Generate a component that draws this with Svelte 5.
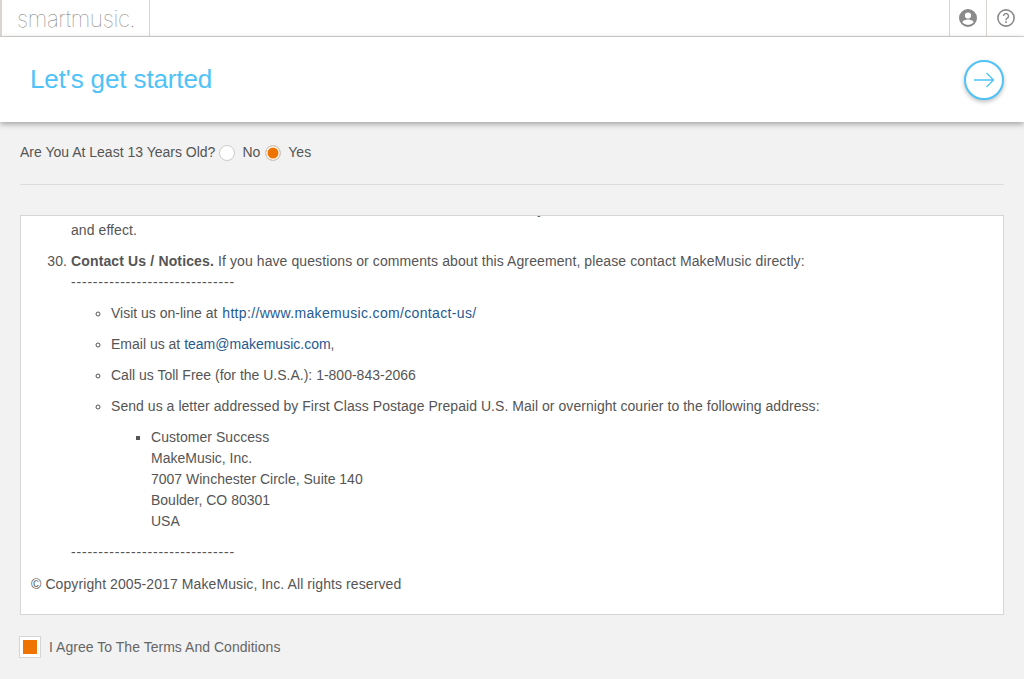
<script>
  const address = ['MakeMusic, Inc.', '7007 Winchester Circle, Suite 140', 'Boulder, CO 80301', 'USA'];
</script>

<div class="page">
  <header class="topbar">
    <div class="logo">smartmusic.</div>
    <div class="spacer"></div>
    <button class="tool" aria-label="Account">
      <svg width="18" height="18" viewBox="0 0 18 18">
        <path fill="#8a8a8a" fill-rule="evenodd" d="M9 0a9 9 0 1 0 0 18A9 9 0 0 0 9 0zm0 3.4a3.1 3.1 0 1 1 0 6.2 3.1 3.1 0 0 1 0-6.2zm0 12.7a7 7 0 0 1-5.6-2.9c.1-1.8 3.7-2.8 5.6-2.8s5.5 1 5.6 2.8A7 7 0 0 1 9 16.100z"/>
      </svg>
    </button>
    <button class="tool help" aria-label="Help">
      <svg width="18" height="18" viewBox="0 0 18 18" fill="none">
        <circle cx="9" cy="9" r="8.1" stroke="#8a8a8a" stroke-width="1.6"/>
        <path d="M6.500 7a2.500 2.500 0 1 1 3.800 2.200c-.9.500-1.300 1-1.300 2" stroke="#8a8a8a" stroke-width="1.500"/>
        <rect x="8.200" y="12.300" width="1.600" height="1.700" fill="#8a8a8a"/>
      </svg>
    </button>
  </header>

  <section class="banner">
    <h1>Let's get started</h1>
    <button class="next" aria-label="Next">
      <svg width="22" height="16" viewBox="0 0 22 16" fill="none" stroke="#4fc3f7" stroke-width="1.300">
        <path d="M1 8h19M13.500 1l7 7-7 7"/>
      </svg>
    </button>
  </section>

  <main class="content">
    <div class="age">
      <span class="question">Are You At Least 13 Years Old?</span>
      <span class="radio"></span>
      <span class="opt">No</span>
      <span class="radio on"></span>
      <span class="opt">Yes</span>
    </div>

    <hr />

    <div class="terms">
      <div class="scroll">
        <ol start="29">
          <li>Unless otherwise noted all the rest of the terms set forth in this shall be fully
            <br />and effect.</li>
          <li>
            <p class="first"><b>Contact Us / Notices.</b> If you have questions or comments about this Agreement, please contact MakeMusic directly:</p>
            <p class="dash">------------------------------</p>
            <ul class="circle">
              <li>Visit us on-line at <a class="url" href="#top">http://www.makemusic.com/contact-us/</a></li>
              <li>Email us at <a href="#top">team@makemusic.com</a>,</li>
              <li>Call us Toll Free (for the U.S.A.): 1-800-843-2066</li>
              <li class="send">Send us a letter addressed by First Class Postage Prepaid U.S. Mail or overnight courier to the following address:
                <ul class="square">
                  <li>Customer Success{#each address as line}<br /><span class="num">{line}</span>{/each}</li>
                </ul>
              </li>
            </ul>
            <p class="dash">------------------------------</p>
          </li>
        </ol>
        <p class="copy">© Copyright 2005-2017 MakeMusic, Inc. All rights reserved</p>
      </div>
    </div>

    <div class="agree">
      <span class="check"><span></span></span>
      <span>I Agree To The Terms And Conditions</span>
    </div>
  </main>
</div>

<style>
  :global(body) {
    margin: 0;
    background: #f2f2f2;
  }
  .page {
    height: 679px;
    overflow: hidden;
    display: flex;
    flex-direction: column;
    font-family: "Liberation Sans", Arial, sans-serif;
    font-size: 14px;
    line-height: 21px;
    color: #555;
    background: #f2f2f2;
  }
  .topbar {
    height: 37px;
    box-sizing: border-box;
    flex: none;
    display: flex;
    background: #fff;
    border-bottom: 1px solid #d9d5d0;
    border-left: 2px solid #d9d5d0;
  }
  .logo {
    width: 148px;
    box-sizing: border-box;
    padding: 5px 0 0 15px;
    border-right: 1px solid #d9d5d0;
    font-family: Inter, sans-serif;
    font-weight: 100;
    font-size: 22.500px;
    line-height: 27px;
    letter-spacing: -0.35px;
    color: #777;
  }
  .spacer {
    flex: 1;
  }
  .tool {
    width: 37px;
    padding: 0;
    display: flex;
    align-items: center;
    justify-content: center;
    background: none;
    border: 0;
    border-left: 1px solid #d9d5d0;
  }
  .tool.help {
    width: 38px;
  }
  .banner {
    height: 85px;
    box-sizing: border-box;
    flex: none;
    display: flex;
    align-items: center;
    justify-content: space-between;
    padding: 0 20px 0 30px;
    background: #fff;
    box-shadow: 0 2px 6px rgba(0, 0, 0, 0.35);
    position: relative;
  }
  h1 {
    margin: 0 0 1px;
    font-size: 26px;
    font-weight: 400;
    line-height: 30px;
    letter-spacing: -0.12px;
    color: #4fc3f7;
  }
  .next {
    width: 40px;
    height: 40px;
    padding: 0;
    display: flex;
    align-items: center;
    justify-content: center;
    background: #fff;
    border: 2px solid #4fc3f7;
    border-radius: 50%;
    box-shadow: 0 2px 4px rgba(0, 0, 0, 0.25);
    margin-top: 1px;
  }
  .content {
    flex: 1;
    padding: 0 20px;
  }
  .age {
    display: flex;
    align-items: center;
    height: 21px;
    margin-top: 20px;
  }
  .radio {
    width: 14px;
    height: 14px;
    margin: 0 7px 0 4px;
    flex: none;
    border: 1px solid #ccc;
    border-radius: 50%;
    background: #fff;
  }
  .radio.on {
    background: #ef7300;
    box-shadow: inset 0 0 0 1.500px #fff;
  }
  .opt {
    margin-right: 1px;
  }
  hr {
    margin: 21px 0 30px;
    border: 0;
    border-top: 1px solid #ddd;
  }
  .terms {
    height: 400px;
    box-sizing: border-box;
    border: 1px solid #d6d6d6;
    background: #fff;
    overflow: hidden;
    letter-spacing: 0.07px;
  }
  .scroll {
    margin-top: -17px;
    padding: 0 10px;
  }
  ol {
    margin: 0;
    padding-left: 40px;
  }
  ol > li {
    margin-bottom: 10px;
  }
  ul {
    margin: 0;
    padding-left: 40px;
  }
  .circle {
    list-style: circle;
    letter-spacing: 0;
  }
  .send {
    letter-spacing: 0.045px;
  }
  .square {
    list-style: square;
    margin-top: 10px;
  }
  .circle > li {
    margin-top: 10px;
  }
  p {
    margin: 0;
  }
  .first {
    letter-spacing: 0.095px;
  }
  .dash {
    letter-spacing: 0.8px;
  }
  .circle + .dash {
    margin-top: 10px;
  }
  .copy {
    margin-top: 11px;
    letter-spacing: 0.09px;
  }
  b {
    font-weight: 700;
    letter-spacing: 0.14px;
  }
  a {
    color: #1f5a92;
    text-decoration: none;
  }
  .url {
    letter-spacing: 0.34px;
    margin-left: 1px;
  }
  .num {
    letter-spacing: 0;
  }
  .agree {
    display: flex;
    align-items: center;
    gap: 8px;
    margin: 21px 0 0 -1px;
    color: #666;
    letter-spacing: 0.03px;
  }
  .check {
    width: 22px;
    height: 22px;
    box-sizing: border-box;
    border: 1px solid #d6d6d6;
    background: #fff;
    display: flex;
    align-items: center;
    justify-content: center;
  }
  .check span {
    width: 14px;
    height: 14px;
    background: #ef7300;
  }
</style>
